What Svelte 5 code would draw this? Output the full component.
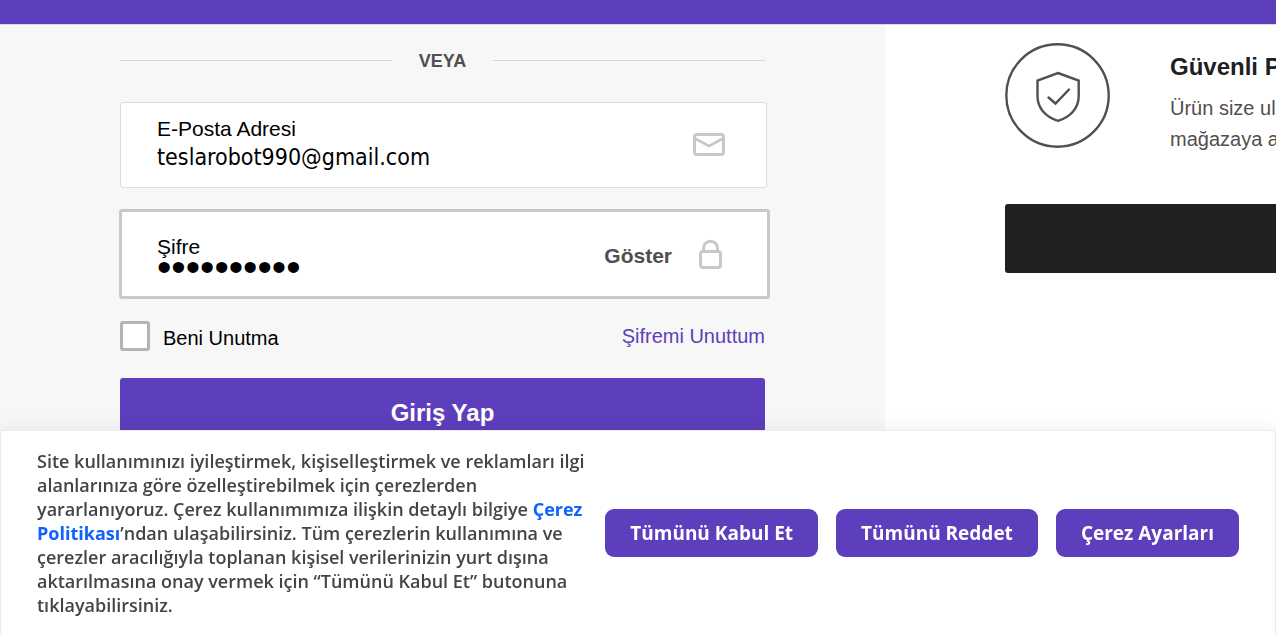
<script>
  let email = $state('teslarobot990@gmail.com');
  let password = $state('robot12345');
  let remember = $state(false);
  let visible = $state(false);

  const actions = ['Tümünü Kabul Et', 'Tümünü Reddet', 'Çerez Ayarları'];
</script>

<div class="page">
  <header class="topbar"></header>
  <main>
    <section class="login">
      <form onsubmit={(e) => e.preventDefault()}>
        <div class="divider"><span>VEYA</span></div>

        <div class="field">
          <div class="entry">
            <label for="email">E-Posta Adresi</label>
            <input id="email" type="email" bind:value={email} />
          </div>
          <svg class="mail" viewBox="0 0 32 24" fill="none" stroke="#c8c8c8" stroke-width="3" aria-hidden="true">
            <rect x="1.5" y="1.5" width="29" height="20" rx="2.5" />
            <path d="M2 5.5 16 13 30 5.5" stroke-width="2.6" stroke-linejoin="round" />
          </svg>
        </div>

        <div class="field active">
          <div class="entry">
            <label for="password">Şifre</label>
            <input id="password" type={visible ? 'text' : 'password'} bind:value={password} />
          </div>
          <button type="button" class="show" onclick={() => (visible = !visible)}>Göster</button>
          <svg class="lock" viewBox="0 0 24 30" fill="none" stroke="#c8c8c8" stroke-width="3" aria-hidden="true">
            <rect x="1.5" y="12.5" width="20" height="16" rx="2.5" />
            <path d="M4.5 12.5V9.500a7 7.2 0 0 1 14 0v3" />
          </svg>
        </div>

        <div class="options">
          <label class="remember"><input type="checkbox" bind:checked={remember} /><span>Beni Unutma</span></label>
          <a href="#sifremi-unuttum">Şifremi Unuttum</a>
        </div>

        <button type="submit" class="submit">Giriş Yap</button>
      </form>
    </section>

    <aside>
      <div class="benefit">
        <svg class="badge" viewBox="0 0 105 105" fill="none" stroke="#505050" stroke-width="2.4" aria-hidden="true">
          <circle cx="52.5" cy="52.5" r="51.2" />
          <path d="M53 30 73.7 37.5V53c0 12-8 21-20.7 24.8C40.5 74 32.5 65 32.5 53V37.5Z" />
          <path d="M43.5 54.5 50.5 60.5 64 46.5" stroke-linecap="round" />
        </svg>
        <div class="copy">
          <h2>Güvenli P</h2>
          <p>Ürün size ul<br />mağazaya a</p>
        </div>
      </div>
      <div class="panel"></div>
    </aside>
  </main>

  <section class="cookies">
    <p>
      Site kullanımınızı iyileştirmek, kişiselleştirmek ve reklamları ilgi alanlarınıza göre
      özelleştirebilmek için çerezlerden yararlanıyoruz. Çerez kullanımımıza ilişkin detaylı bilgiye
      <a href="#cerez-politikasi">Çerez Politikası</a>’ndan ulaşabilirsiniz. Tüm çerezlerin kullanımına
      ve çerezler aracılığıyla toplanan kişisel verilerinizin yurt dışına aktarılmasına onay vermek
      için “Tümünü Kabul Et” butonuna tıklayabilirsiniz.
    </p>
    <div class="actions">
      {#each actions as action}
        <button type="button">{action}</button>
      {/each}
    </div>
  </section>
</div>

<style>
  :global(body) {
    margin: 0;
  }
  * {
    box-sizing: border-box;
  }
  .page {
    display: flex;
    flex-direction: column;
    height: 100vh;
    overflow: hidden;
    font-family: 'Liberation Sans', Arial, sans-serif;
    font-size: 20px;
    color: #000;
    background: #fff;
  }
  button,
  input {
    font: inherit;
    border: 0;
    padding: 0;
    margin: 0;
  }
  button {
    cursor: pointer;
  }
  a {
    color: #5d3ebc;
    text-decoration: none;
  }
  .topbar {
    flex: none;
    height: 25px;
    background: #5d3ebc;
    border-bottom: 1px solid #dcdcdc;
  }
  main {
    flex: 1;
    display: grid;
    grid-template-columns: 885fr 391fr;
    min-height: 0;
  }
  .login {
    padding: 23px 120px 0;
    background: #f7f7f7;
  }
  .divider {
    display: flex;
    align-items: center;
    gap: 27px;
    height: 24px;
    margin-bottom: 30px;
    color: #4f4f4f;
    font-size: 18px;
    font-weight: 700;
  }
  .divider span {
    padding-top: 2px;
  }
  .divider::before,
  .divider::after {
    content: '';
    flex: 1;
    height: 1px;
    background: #d7d7d7;
  }
  .field {
    display: flex;
    align-items: center;
    height: 86px;
    margin-right: -2px;
    padding: 0 41px 0 36px;
    background: #fff;
    border: 1px solid #dcdcdc;
    border-radius: 3px;
  }
  .field.active {
    height: 90px;
    margin: 21px -5px 22px -1px;
    padding: 0 44px 0 35px;
    border: 3px solid #c8c8c8;
  }
  .entry {
    flex: 1;
    display: flex;
    flex-direction: column;
    min-width: 0;
  }
  .entry label {
    font-size: 21px;
    line-height: 24px;
  }
  .entry input {
    width: 100%;
    height: 32px;
    font-family: 'DejaVu Sans Condensed', Tahoma, sans-serif;
    font-size: 23px;
    background: none;
    outline: none;
  }
  .active .entry input {
    height: 48px;
    margin: -16px 0 -18px;
    font-family: 'Liberation Sans', Arial, sans-serif;
    font-size: 41px;
  }
  .mail {
    width: 32px;
    height: 24px;
  }
  .lock {
    width: 24px;
    height: 30px;
  }
  .show {
    margin-right: 27px;
    padding-top: 3px;
    font-size: 21px;
    font-weight: 700;
    color: #4f4f4f;
    background: none;
  }
  .options {
    display: flex;
    justify-content: space-between;
    align-items: center;
    height: 30px;
    margin-bottom: 27px;
  }
  .remember {
    display: flex;
    align-items: center;
    gap: 13px;
  }
  .remember span {
    padding-top: 4px;
  }
  .remember input {
    appearance: none;
    width: 30px;
    height: 30px;
    background: #fff;
    border: 3px solid #b4b4b4;
    border-radius: 3px;
  }
  .remember input:checked {
    background: #5d3ebc;
  }
  .submit {
    width: 100%;
    height: 70px;
    border-radius: 3px;
    background: #5d3ebc;
    color: #fff;
    font-size: 24px;
    font-weight: 700;
  }
  aside {
    min-width: 0;
    padding: 18px 0 0 120px;
    overflow: hidden;
  }
  .benefit {
    display: flex;
    gap: 60px;
    margin-bottom: 49px;
    white-space: nowrap;
  }
  .badge {
    flex: none;
    width: 105px;
    height: 105px;
  }
  .copy {
    padding-top: 9px;
  }
  h2 {
    margin: 0 0 11px;
    font-size: 24px;
    line-height: 30px;
    color: #202020;
  }
  .copy p {
    margin: 0;
    font-size: 20px;
    line-height: 31px;
    color: #4f4f4f;
  }
  .panel {
    height: 69px;
    background: #202020;
    border-radius: 3px 0 0 3px;
  }
  .cookies {
    position: fixed;
    left: 0;
    right: 0;
    bottom: 0;
    display: flex;
    align-items: center;
    gap: 12px;
    padding: 18px 36px 17px;
    background: #fff;
    border: 1px solid #ebebeb;
    border-bottom: 0;
    box-shadow: 0 0 18px rgba(0, 0, 0, 0.08);
    font-family: 'Open Sans', sans-serif;
  }
  .cookies p {
    flex: 1;
    margin: 0;
    font-size: 18px;
    font-weight: 600;
    line-height: 24px;
    color: #444;
  }
  .cookies a {
    font-weight: 700;
    color: #0f62fe;
  }
  .actions {
    flex: none;
    display: flex;
    gap: 18px;
  }
  .actions button {
    height: 48px;
    padding: 0 25px;
    border-radius: 9px;
    background: #5d3ebc;
    color: #fff;
    font-size: 19px;
    font-weight: 700;
  }
</style>
